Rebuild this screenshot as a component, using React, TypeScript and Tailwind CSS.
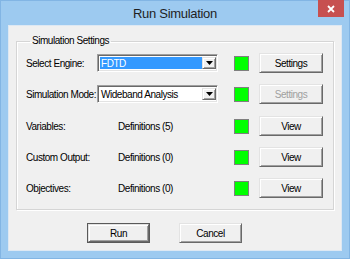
import React from 'react';

const raised =
  'border border-t-[#e3e3e3] border-l-[#e3e3e3] border-b-[#696969] border-r-[#696969] shadow-[inset_1px_1px_0_#ffffff,inset_-1px_-1px_0_#a0a0a0] bg-[#f0f0f0]';

const Button: React.FC<{ label: string; disabled?: boolean }> = ({ label, disabled }) => (
  <div
    className={`${raised} flex items-center justify-center w-[64px] h-[20px] ${disabled ? 'text-[#a0a0a0]' : 'text-black'}`}
  >
    {label}
  </div>
);

const Led: React.FC = () => (
  <div className="w-[15px] h-[15px] border border-[#7f7f7f] bg-[#00ff00] ml-[16px] mr-[10px]" />
);

const Combo: React.FC<{ value: string; selected?: boolean }> = ({ value, selected }) => (
  <div className="w-[121px] h-[18px] flex bg-white border border-t-[#a0a0a0] border-l-[#a0a0a0] border-b-[#ffffff] border-r-[#ffffff] shadow-[inset_1px_1px_0_#696969,inset_-1px_-1px_0_#e3e3e3] p-[2px] pr-[1px]">
    <div className={`flex-1 flex items-center px-[1px] ${selected ? 'bg-[#3399ff] text-white' : 'text-black'}`}>{value}</div>
    <div className={`${raised} w-[14px] h-full flex items-center justify-center`}>
      <svg width="7" height="4" viewBox="0 0 7 4">
        <path d="M0 0h7L3.5 4z" fill="#000" />
      </svg>
    </div>
  </div>
);

const rows = [
  { label: 'Variables:', defs: 'Definitions (5)', mt: 'mt-[12px]' },
  { label: 'Custom Output:', defs: 'Definitions (0)', mt: 'mt-[11px]' },
  { label: 'Objectives:', defs: 'Definitions (0)', mt: 'mt-[11px]' },
];

export default function App() {
  return (
    <div className="w-[350px] h-[259px] bg-[#9dcaf0] border border-[#82b5e4] flex flex-col font-['Liberation_Sans',Arial,sans-serif] text-[10px] tracking-[-0.45px] text-black select-none">
      <div className="relative h-[24px] flex items-center justify-center">
        <span className="text-[13px] tracking-[-0.3px] text-[#1f1f1f] mt-[1px]">Run Simulation</span>
        <div className="absolute right-[5px] top-[-1px] w-[26px] h-[17px] bg-[#c75050] flex items-center justify-center">
          <svg width="8" height="8" viewBox="0 0 8 8">
            <path d="M1 1l6 6M7 1l-6 6" stroke="#fff" strokeWidth="1.8" />
          </svg>
        </div>
      </div>

      <div className="mx-[7px] h-[226px] bg-[#f0f0f0] border border-[#dde8f3] flex flex-col">
        <fieldset className="mx-[7px] mt-[9px] border border-[#d5d5d5] shadow-[inset_1px_1px_0_#fff,1px_1px_0_#fff] pl-[9px] pt-[6px] pb-[11px]">
          <legend className="ml-[4px] px-[2px] h-[12px] leading-[12px]">Simulation Settings</legend>

          <div className="flex items-center h-[20px]">
            <span className="w-[71px]">Select Engine:</span>
            <Combo value="FDTD" selected />
            <Led />
            <Button label="Settings" />
          </div>

          <div className="flex items-center h-[20px] mt-[11px]">
            <span className="w-[71px]">Simulation Mode:</span>
            <Combo value="Wideband Analysis" />
            <Led />
            <Button label="Settings" disabled />
          </div>

          {rows.map((r) => (
            <div key={r.label} className={`flex items-center h-[20px] ${r.mt}`}>
              <span className="w-[92px]">{r.label}</span>
              <span className="w-[100px]">{r.defs}</span>
              <Led />
              <Button label="View" />
            </div>
          ))}
        </fieldset>

        <div className="flex items-center mt-[13px] ml-[78px] gap-[29px]">
          <div className="w-[63px] h-[20px] border border-[#5a5a5a] flex">
            <div className={`${raised} flex-1 flex items-center justify-center`}>Run</div>
          </div>
          <div className={`${raised} w-[63px] h-[20px] flex items-center justify-center`}>Cancel</div>
        </div>
      </div>
    </div>
  );
}
